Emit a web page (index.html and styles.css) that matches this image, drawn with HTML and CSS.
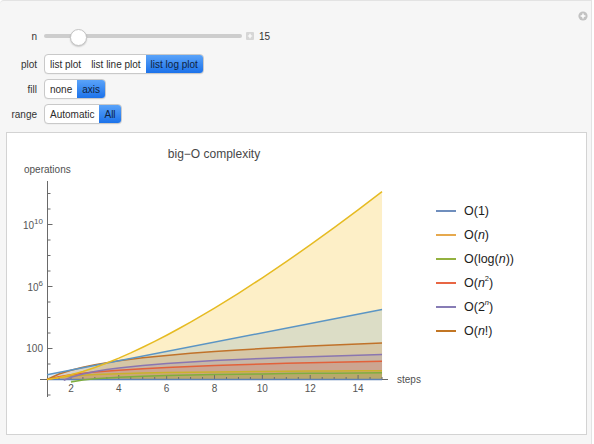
FILE: index.html
```html
<!DOCTYPE html>
<html>
<head>
<meta charset="utf-8">
<link rel="stylesheet" href="styles.css">
</head>
<body>
<div class="app">
  <span class="corner-plus"><svg width="10" height="10" viewBox="0 0 10 10"><circle cx="5" cy="5" r="4.6" fill="#c2c2c2"/><path d="M5 2.6v4.8M2.6 5h4.8" stroke="#fff" stroke-width="1.4"/></svg></span>
  <div class="controls">
    <div class="row slider-row">
      <span class="label">n</span>
      <div class="slider"><div class="track"></div><div class="thumb"></div></div>
      <span class="step-btn"><svg width="8" height="8" viewBox="0 0 8 8"><rect x="0" y="0" width="8" height="8" rx="1" fill="#d6d6d6"/><path d="M4 1.8v4.4M1.8 4h4.4" stroke="#fff" stroke-width="1.2"/></svg></span>
      <span class="value">15</span>
    </div>
    <div class="row seg-row">
      <span class="label">plot</span>
      <div class="seg"><span class="opt">list plot</span><span class="opt">list line plot</span><span class="opt on">list log plot</span></div>
    </div>
    <div class="row seg-row">
      <span class="label">fill</span>
      <div class="seg"><span class="opt">none</span><span class="opt on">axis</span></div>
    </div>
    <div class="row seg-row">
      <span class="label">range</span>
      <div class="seg"><span class="opt">Automatic</span><span class="opt on">All</span></div>
    </div>
  </div>
  <div class="plot-panel">
    <svg class="chart" width="420" height="301" viewBox="7 133 420 301">
      <text class="title" x="214" y="158" text-anchor="middle">big−O complexity</text>
      <text class="axlabel" x="24" y="172.5">operations</text>
      <text class="axlabel" x="397" y="383">steps</text>

      <g class="fills">
        <path fill="#f7b800" fill-opacity="0.22" d="M47,379.5 L58.97,377.58 L70.93,374.83 L82.90,371.42 L94.86,367.44 L106.83,362.98 L118.79,358.11 L130.76,352.86 L142.72,347.27 L154.69,341.38 L166.65,335.21 L178.62,328.78 L190.58,322.11 L202.55,315.22 L214.51,308.11 L238.44,293.33 L262.37,277.83 L286.30,261.68 L310.23,244.95 L334.16,227.69 L358.09,209.92 L382.02,191.69 L382.02,379.5 Z"/>
        <path fill="#5b95c4" fill-opacity="0.2" d="M47,379.5 L47,374.83 L382.02,309.5 L382.02,379.5 Z"/>
        <path fill="#c0722a" fill-opacity="0.2" d="M47,379.5 L58.97,374.04 L70.93,370.17 L82.90,367.16 L94.86,364.71 L106.83,362.63 L118.79,360.84 L142.72,357.83 L166.65,355.38 L190.58,353.30 L214.51,351.50 L238.44,349.92 L262.37,348.5 L286.30,347.22 L310.23,346.05 L334.16,344.97 L358.09,343.97 L382.02,343.04 L382.02,379.5 Z"/>
        <path fill="#8a76b0" fill-opacity="0.2" d="M63.75,379.5 L63.75,380.2 L70.93,377.30 L82.90,373.92 L94.86,371.47 L106.83,369.55 L118.79,367.97 L142.72,365.46 L166.65,363.51 L190.58,361.92 L214.51,360.57 L238.44,359.41 L262.37,358.39 L286.30,357.47 L310.23,356.65 L334.16,355.89 L358.09,355.20 L382.02,354.56 L382.02,379.5 Z"/>
        <path fill="#e2613a" fill-opacity="0.2" d="M47,379.5 L58.97,376.77 L70.93,374.83 L82.90,373.33 L94.86,372.10 L118.79,370.17 L142.72,368.67 L166.65,367.44 L190.58,366.40 L214.51,365.50 L238.44,364.71 L262.37,364.0 L286.30,363.36 L310.23,362.77 L334.16,362.23 L358.09,361.73 L382.02,361.27 L382.02,379.5 Z"/>
        <path fill="#c7b12f" fill-opacity="0.25" d="M47,379.5 L58.97,377.21 L70.93,375.95 L94.86,374.51 L118.79,373.65 L142.72,373.04 L166.65,372.59 L190.58,372.23 L214.51,371.93 L238.44,371.68 L262.37,371.46 L286.30,371.27 L310.23,371.10 L334.16,370.94 L358.09,370.80 L382.02,370.68 L382.02,379.5 Z"/>
        <path fill="#7fae3e" fill-opacity="0.25" d="M70.93,379.5 L70.93,381.97 L82.90,380.09 L94.86,378.87 L118.79,377.30 L142.72,376.30 L166.65,375.57 L190.58,375.02 L214.51,374.57 L238.44,374.20 L262.37,373.89 L286.30,373.61 L310.23,373.37 L334.16,373.16 L358.09,372.97 L382.02,372.79 L382.02,379.5 Z"/>
      </g>

      <g class="axes">
        <line x1="47.5" y1="181" x2="47.5" y2="397"/>
        <line x1="40" y1="379.5" x2="388" y2="379.5"/>
        <path d="M47.5,395 h3 M47.5,364 h3 M47.5,333 h3 M47.5,317.5 h3 M47.5,302 h3 M47.5,271 h3 M47.5,255.5 h3 M47.5,240 h3 M47.5,209 h3 M47.5,193.5 h3"/>
        <path d="M47.5,348.5 h5 M47.5,286.5 h5 M47.5,224.5 h5"/>
        <path d="M70.93,379.5 v-4.5 M118.79,379.5 v-4.5 M166.65,379.5 v-4.5 M214.51,379.5 v-4.5 M262.37,379.5 v-4.5 M310.23,379.5 v-4.5 M358.09,379.5 v-4.5"/>
        <path d="M58.97,379.5 v-2.5 M82.90,379.5 v-2.5 M94.86,379.5 v-2.5 M106.83,379.5 v-2.5 M130.76,379.5 v-2.5 M142.72,379.5 v-2.5 M154.69,379.5 v-2.5 M178.62,379.5 v-2.5 M190.58,379.5 v-2.5 M202.55,379.5 v-2.5 M226.48,379.5 v-2.5 M238.44,379.5 v-2.5 M250.41,379.5 v-2.5 M274.34,379.5 v-2.5 M286.30,379.5 v-2.5 M298.27,379.5 v-2.5 M322.20,379.5 v-2.5 M334.16,379.5 v-2.5 M346.13,379.5 v-2.5 M370.06,379.5 v-2.5 M382.02,379.5 v-2.5"/>
      </g>

      <g class="ticklabels">
        <text x="43" y="352" text-anchor="end">100</text>
        <text x="43" y="290.5" text-anchor="end">10<tspan class="sup" dy="-5">6</tspan></text>
        <text x="43" y="229" text-anchor="end">10<tspan class="sup" dy="-5">10</tspan></text>
        <text x="70.93" y="391.5" text-anchor="middle">2</text>
        <text x="118.79" y="391.5" text-anchor="middle">4</text>
        <text x="166.65" y="391.5" text-anchor="middle">6</text>
        <text x="214.51" y="391.5" text-anchor="middle">8</text>
        <text x="262.37" y="391.5" text-anchor="middle">10</text>
        <text x="310.23" y="391.5" text-anchor="middle">12</text>
        <text x="358.09" y="391.5" text-anchor="middle">14</text>
      </g>

      <g class="lines">
        <path stroke="#5E81B5" d="M47,379.5 L382.02,379.5"/>
        <path stroke="#7fae3e" d="M70.93,381.97 L82.90,380.09 L94.86,378.87 L118.79,377.30 L142.72,376.30 L166.65,375.57 L190.58,375.02 L214.51,374.57 L238.44,374.20 L262.37,373.89 L286.30,373.61 L310.23,373.37 L334.16,373.16 L358.09,372.97 L382.02,372.79"/>
        <path stroke="#c9b22c" d="M47,379.5 L58.97,377.21 L70.93,375.95 L94.86,374.51 L118.79,373.65 L142.72,373.04 L166.65,372.59 L190.58,372.23 L214.51,371.93 L238.44,371.68 L262.37,371.46 L286.30,371.27 L310.23,371.10 L334.16,370.94 L358.09,370.80 L382.02,370.68"/>
        <path stroke="#e2613a" d="M47,379.5 L58.97,376.77 L70.93,374.83 L82.90,373.33 L94.86,372.10 L118.79,370.17 L142.72,368.67 L166.65,367.44 L190.58,366.40 L214.51,365.50 L238.44,364.71 L262.37,364.0 L286.30,363.36 L310.23,362.77 L334.16,362.23 L358.09,361.73 L382.02,361.27"/>
        <path stroke="#8a76b0" d="M63.75,380.2 L70.93,377.30 L82.90,373.92 L94.86,371.47 L106.83,369.55 L118.79,367.97 L142.72,365.46 L166.65,363.51 L190.58,361.92 L214.51,360.57 L238.44,359.41 L262.37,358.39 L286.30,357.47 L310.23,356.65 L334.16,355.89 L358.09,355.20 L382.02,354.56"/>
        <path stroke="#c0722a" d="M47,379.5 L58.97,374.04 L70.93,370.17 L82.90,367.16 L94.86,364.71 L106.83,362.63 L118.79,360.84 L142.72,357.83 L166.65,355.38 L190.58,353.30 L214.51,351.50 L238.44,349.92 L262.37,348.5 L286.30,347.22 L310.23,346.05 L334.16,344.97 L358.09,343.97 L382.02,343.04"/>
        <path stroke="#5b95c4" d="M47,374.83 L382.02,309.5"/>
        <path stroke="#e6bb22" d="M47,379.5 L58.97,377.58 L70.93,374.83 L82.90,371.42 L94.86,367.44 L106.83,362.98 L118.79,358.11 L130.76,352.86 L142.72,347.27 L154.69,341.38 L166.65,335.21 L178.62,328.78 L190.58,322.11 L202.55,315.22 L214.51,308.11 L238.44,293.33 L262.37,277.83 L286.30,261.68 L310.23,244.95 L334.16,227.69 L358.09,209.92 L382.02,191.69"/>
      </g>
    </svg>
    <div class="legend">
      <div class="entry"><span class="sw c1"></span><span>O(1)</span></div>
      <div class="entry"><span class="sw c2"></span><span>O(<i>n</i>)</span></div>
      <div class="entry"><span class="sw c3"></span><span>O(log(<i>n</i>))</span></div>
      <div class="entry"><span class="sw c4"></span><span>O(<i>n</i><sup>2</sup>)</span></div>
      <div class="entry"><span class="sw c5"></span><span>O(2<sup><i>n</i></sup>)</span></div>
      <div class="entry"><span class="sw c6"></span><span>O(<i>n</i>!)</span></div>
    </div>
  </div>
</div>
</body>
</html>
```

FILE: styles.css
```css
html, body {
  margin: 0;
  padding: 0;
  background: #ffffff;
}

body {
  font-family: "Liberation Sans", Arial, sans-serif;
  color: #333;
}

.app {
  position: relative;
  width: 592px;
  height: 444px;
  box-sizing: border-box;
  background: #f6f6f6;
  border-top: 1px solid #e3e3e3;
  border-right: 1px solid #e3e3e3;
  border-top-left-radius: 4px;
}

.corner-plus {
  position: absolute;
  left: 578px;
  top: 10px;
  width: 10px;
  height: 10px;
  line-height: 0;
}

.controls {
  display: flex;
  flex-direction: column;
  padding-top: 25px;
}

.row {
  display: flex;
  align-items: center;
  height: 20px;
}

.seg-row {
  margin-top: 5px;
}

.slider-row + .seg-row {
  margin-top: 8px;
}

.label {
  width: 37px;
  margin-right: 7px;
  text-align: right;
  font-size: 10px;
  color: #333;
}

.slider {
  position: relative;
  width: 198px;
  height: 20px;
  display: flex;
  align-items: center;
}

.track {
  flex: 1;
  height: 4px;
  border-radius: 2px;
  background: #cdcdcd;
}

.thumb {
  position: absolute;
  left: 25.5px;
  top: 2.5px;
  width: 17px;
  height: 17px;
  box-sizing: border-box;
  border-radius: 50%;
  background: #ffffff;
  border: 1px solid #c4c4c4;
  box-shadow: 0 1px 1.5px rgba(0, 0, 0, 0.18);
}

.step-btn {
  margin-left: 4px;
  width: 8px;
  height: 8px;
  line-height: 0;
}

.value {
  margin-left: 5px;
  font-size: 10px;
  color: #333;
}

.seg {
  display: flex;
  height: 20px;
  box-sizing: border-box;
  border: 1px solid #c9c9c9;
  border-radius: 4px;
  background: #ffffff;
  overflow: hidden;
  box-shadow: 0 0.5px 0.5px rgba(0, 0, 0, 0.06);
}

.opt {
  display: flex;
  align-items: center;
  padding: 0 5px;
  font-size: 10px;
  color: #2b2b2b;
  white-space: nowrap;
}

.opt.on {
  background: linear-gradient(#5aa3f9, #1c72ea);
  color: #0f2340;
}

.plot-panel {
  display: flex;
  margin-top: 8px;
  margin-left: 6px;
  width: 581px;
  height: 303px;
  box-sizing: border-box;
  background: #ffffff;
  border: 1px solid #d3d3d3;
}

.chart {
  display: block;
  flex: none;
  font-family: "Liberation Sans", Arial, sans-serif;
}

.title {
  font-size: 12px;
  fill: #474747;
}

.axlabel {
  font-size: 10px;
  fill: #505050;
}

.ticklabels text {
  font-size: 10px;
  fill: #555555;
}

.ticklabels .sup {
  font-size: 8px;
}

.axes line,
.axes path {
  stroke: #6a6a6a;
  stroke-width: 1;
  fill: none;
}

.lines path {
  fill: none;
  stroke-width: 1.5;
  stroke-linejoin: round;
}

.legend {
  padding: 66px 0 0 9px;
}

.entry {
  display: flex;
  align-items: center;
  height: 24px;
  font-size: 12.5px;
  color: #1c1c1c;
}

.sw {
  width: 20px;
  height: 1.5px;
  margin-right: 8px;
}

.c1 { background: #6f8ebd; }
.c2 { background: #e6a94e; }
.c3 { background: #93b13f; }
.c4 { background: #e86644; }
.c5 { background: #877cb5; }
.c6 { background: #c27624; }

.entry sup {
  font-size: 7.5px;
  line-height: 0;
  vertical-align: 6px;
}
```
